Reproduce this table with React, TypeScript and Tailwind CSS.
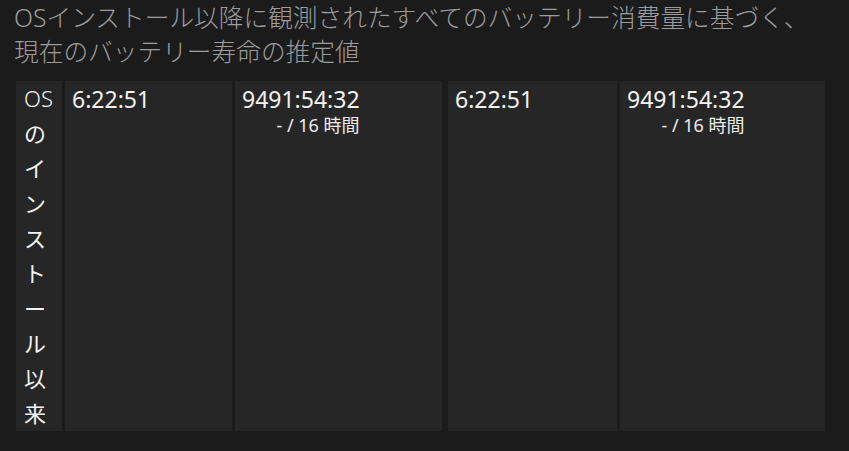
const FONT = '"Noto Sans", "Noto Sans CJK JP", sans-serif';

// 縦に1文字ずつ並ぶ見出しセル
const HEADER_LINES = ["OS", "の", "イ", "ン", "ス", "ト", "ー", "ル", "以", "来"];

interface Usage {
  time: string;
  /** 推定値の下に出る補足行（任意） */
  note?: string;
  width: string;
}

const CELLS: Usage[] = [
  { time: "6:22:51", width: "w-[167px]" },
  { time: "9491:54:32", note: "- / 16 時間", width: "w-[207px]" },
  { time: "6:22:51", width: "w-[169px]" },
  { time: "9491:54:32", note: "- / 16 時間", width: "w-[205px]" },
];

function UsageCell({ cell, extraGap }: { cell: Usage; extraGap?: boolean }) {
  return (
    <div className={`${cell.width} ${extraGap ? "ml-[6px]" : "ml-[3px]"} shrink-0 bg-[#262626] pl-[7px] pt-[2px]`}>
      <div className="inline-block text-right">
        <div className="text-[23px] leading-[33px] text-[#f2f2f2] text-left">{cell.time}</div>
        {cell.note && (
          <div className="text-[18px] leading-[20px] text-[#ececec] -mt-[1px]">{cell.note}</div>
        )}
      </div>
    </div>
  );
}

export default function App() {
  return (
    <div className="w-[849px] h-[451px] bg-[#1b1b1b] overflow-hidden" style={{ fontFamily: FONT }}>
      <div className="pl-[14px] pt-[1px] text-[24.7px] leading-[34px] text-[#9c9c9c] font-light">
        <div>OSインストール以降に観測されたすべてのバッテリー消費量に基づく、</div>
        <div>現在のバッテリー寿命の推定値</div>
      </div>

      <div className="mt-[12px] ml-4 flex">
        <div className="w-[46px] shrink-0 bg-[#262626] pl-2 text-[22px] leading-[35px] text-[#f2f2f2]">
          {HEADER_LINES.map((line, i) => (
            <div key={i} className={i === 0 ? "font-light" : ""}>
              {line}
            </div>
          ))}
        </div>
        {CELLS.map((cell, i) => (
          <UsageCell key={i} cell={cell} extraGap={i === 2} />
        ))}
      </div>
    </div>
  );
}
